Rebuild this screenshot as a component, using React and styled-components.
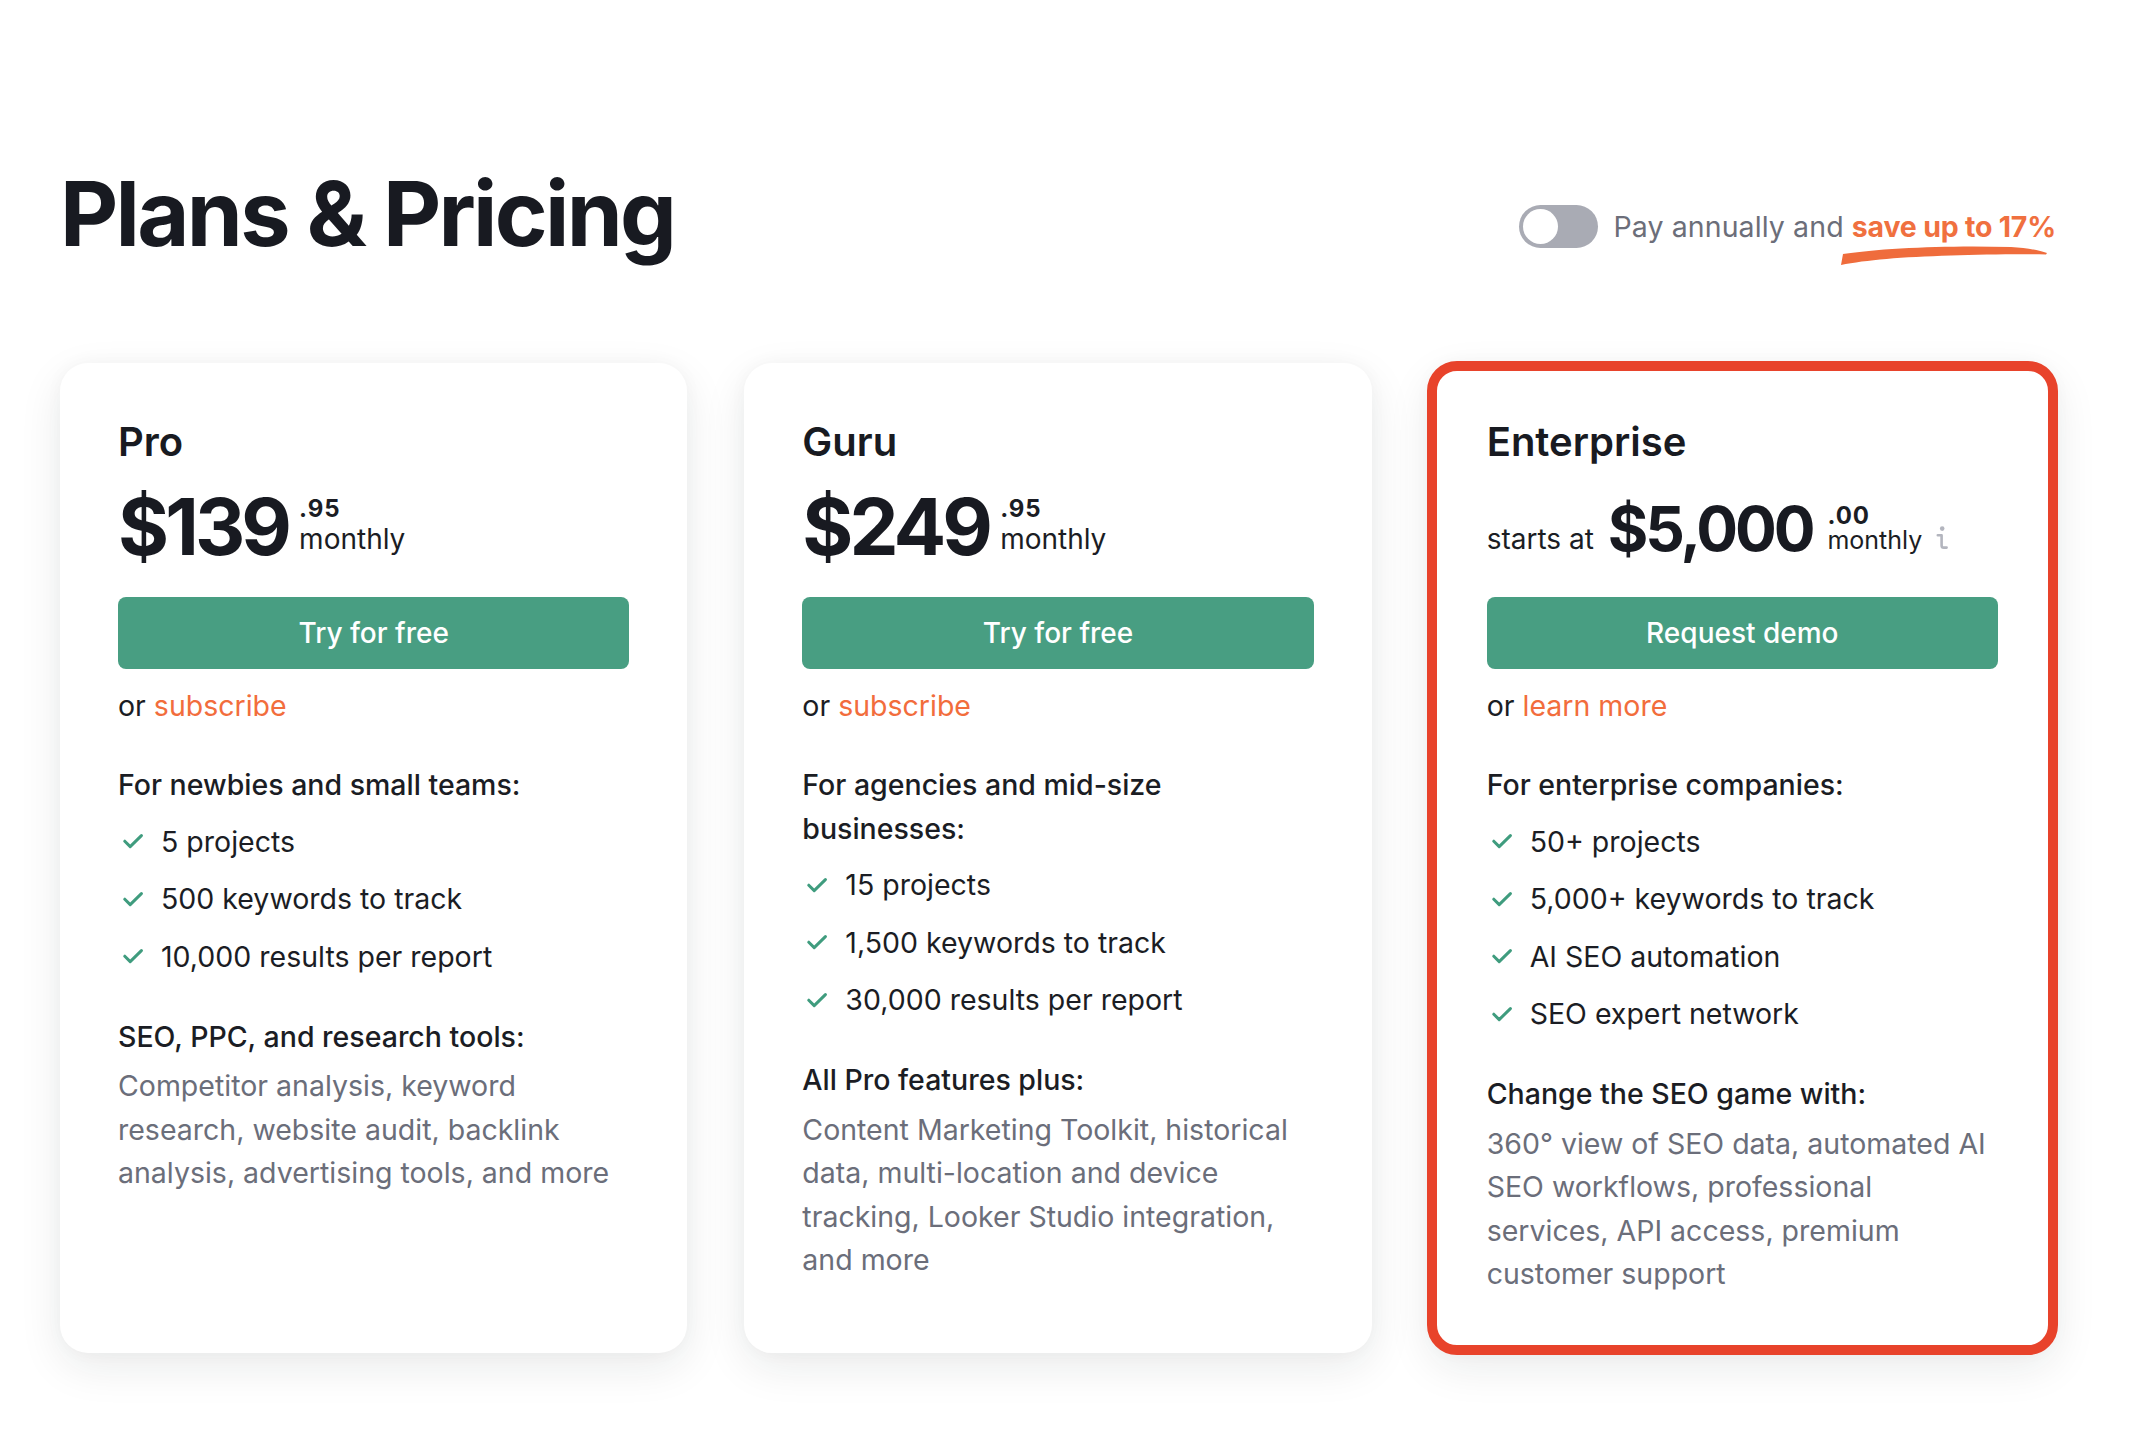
import React from 'react';
import styled, { createGlobalStyle, css } from 'styled-components';

const GlobalStyle = createGlobalStyle`
  * { box-sizing: border-box; }
  html, body { margin: 0; background: #ffffff; }
  body {
    font-family: Inter, "Noto Sans", "Liberation Sans", sans-serif;
    color: #1b1d24;
    -webkit-font-smoothing: antialiased;
  }
`;

const Page = styled.main`
  padding: 169px 0 88px 60px;
`;

const Container = styled.div`
  width: 1996px;
`;

const Header = styled.header`
  display: flex;
  justify-content: space-between;
  align-items: flex-start;
`;

const Title = styled.h1`
  margin: 0;
  font-size: 90px;
  line-height: 90px;
  font-weight: 700;
  letter-spacing: -2.7px;
  color: #181a21;
`;

const Billing = styled.div`
  display: flex;
  align-items: center;
  gap: 15px;
  margin-top: 36px;
`;

const Switch = styled.span`
  display: flex;
  align-items: center;
  width: 79px;
  height: 43px;
  padding: 4px;
  border-radius: 22px;
  background: #a9abb4;
`;

const Knob = styled.span`
  width: 35px;
  height: 35px;
  border-radius: 50%;
  background: #ffffff;
`;

const BillingText = styled.span`
  font-size: 28.5px;
  line-height: 36px;
  color: #6c6e79;
  letter-spacing: 0.1px;
`;

const Save = styled.strong`
  position: relative;
  font-weight: 700;
  color: #f0703f;
  letter-spacing: -0.2px;
`;

const SwashSvg = styled.svg`
  position: absolute;
  left: -11px;
  top: 36px;
  width: 208px;
  height: 22px;
`;

const Cards = styled.div`
  display: grid;
  grid-template-columns: repeat(3, 1fr);
  gap: 57px;
  margin-top: 104px;
`;

const Card = styled.section`
  background: #ffffff;
  border-radius: 28px;
  padding: 54.5px 58px 57px;
  box-shadow: 0 14px 44px rgba(27, 29, 38, 0.09), 0 0 18px rgba(27, 29, 38, 0.03);
  ${(p) =>
    p.$highlight &&
    css`
      outline: 10px solid #e8432b;
      outline-offset: -8px;
    `}
`;

const PlanName = styled.h2`
  margin: 0;
  font-size: 40px;
  line-height: 48px;
  font-weight: 600;
  color: #181a21;
`;

const PriceRow = styled.div`
  display: flex;
  align-items: flex-end;
  height: 78px;
  margin: 22px 0 31px;
`;

const Prefix = styled.span`
  font-size: 28px;
  line-height: 28px;
  margin: 0 14px 12.6px 0;
`;

const Amount = styled.span`
  font-size: ${(p) => p.$size}px;
  line-height: ${(p) => p.$size}px;
  font-weight: 700;
  letter-spacing: -0.05em;
  color: #181a21;
  margin-bottom: ${(p) => p.$lift}px;
`;

const Fraction = styled.span`
  display: flex;
  flex-direction: column;
  margin: 0 0 ${(p) => p.$lift}px ${(p) => p.$indent}px;
`;

const Cents = styled.span`
  font-size: 24px;
  line-height: 18px;
  font-weight: 700;
  letter-spacing: 0.04em;
  margin-bottom: ${(p) => p.$space}px;
`;

const Period = styled.span`
  font-size: ${(p) => p.$size}px;
  line-height: 24px;
`;

const InfoSvg = styled.svg`
  width: 12px;
  height: 24px;
  margin: 0 0 16px 14px;
`;

const ActionButton = styled.button`
  display: flex;
  align-items: center;
  justify-content: center;
  width: 100%;
  height: 72px;
  border: 0;
  border-radius: 8px;
  background: #489e82;
  color: #ffffff;
  font-family: inherit;
  font-size: 28px;
  font-weight: 500;
  cursor: pointer;
`;

const Alt = styled.p`
  margin: 15.5px 0 0;
  font-size: 28.5px;
  line-height: 43.5px;
`;

const AltLink = styled.a`
  color: #f26d3c;
  text-decoration: none;
`;

const SectionTitle = styled.h3`
  margin: ${(p) => (p.$first ? 35.8 : 36.5)}px 0 0;
  font-size: 28.5px;
  line-height: 43.5px;
  font-weight: 500;
  color: #1b1d24;
`;

const FeatureList = styled.ul`
  list-style: none;
  margin: 13px 0 0;
  padding: 0;
  display: flex;
  flex-direction: column;
  gap: 14px;
`;

const Feature = styled.li`
  display: flex;
  align-items: center;
  font-size: 28.5px;
  line-height: 43.5px;
`;

const CheckSvg = styled.svg`
  flex: none;
  width: 20px;
  height: 15px;
  margin: 0 18px 0 5px;
`;

const Description = styled.p`
  margin: 6px 0 0;
  font-size: 28.5px;
  line-height: 43.5px;
  color: #6b6e7a;
`;

const Check = () => (
  <CheckSvg viewBox="0 0 20 15" fill="none">
    <path d="M1.8 7.2 L7.2 12.6 L18.4 1.6" stroke="#3f9c7e" strokeWidth="3" strokeLinecap="round" strokeLinejoin="round" />
  </CheckSvg>
);

const InfoIcon = () => (
  <InfoSvg viewBox="0 0 12 24" fill="none">
    <circle cx="6.2" cy="2.6" r="2.3" fill="#b3b5be" />
    <path d="M1.8 9.2 H5.6 V19.4 Q5.6 21.6 7.8 21.6 H10.6" stroke="#b3b5be" strokeWidth="2.6" strokeLinecap="round" strokeLinejoin="round" />
  </InfoSvg>
);

const Swash = () => (
  <SwashSvg viewBox="0 0 208 22">
    <path
      d="M2 9 C40 3, 110 0, 170 2 C185 3, 198 5, 206 8 L205 9.5 C180 9, 140 9.5, 110 10.5 C60 12, 25 15, 0 20 Z"
      fill="#ef6c3c"
    />
  </SwashSvg>
);

const plans = [
  {
    name: 'Pro',
    price: '$139',
    cents: '.95',
    action: 'Try for free',
    alt: 'subscribe',
    audience: 'For newbies and small teams:',
    features: ['5 projects', '500 keywords to track', '10,000 results per report'],
    toolsTitle: 'SEO, PPC, and research tools:',
    tools: 'Competitor analysis, keyword research, website audit, backlink analysis, advertising tools, and more',
  },
  {
    name: 'Guru',
    price: '$249',
    cents: '.95',
    action: 'Try for free',
    alt: 'subscribe',
    audience: 'For agencies and mid-size businesses:',
    features: ['15 projects', '1,500 keywords to track', '30,000 results per report'],
    toolsTitle: 'All Pro features plus:',
    tools: 'Content Marketing Toolkit, historical data, multi-location and device tracking, Looker Studio integration, and more',
  },
  {
    name: 'Enterprise',
    prefix: 'starts at',
    price: '$5,000',
    cents: '.00',
    action: 'Request demo',
    alt: 'learn more',
    audience: 'For enterprise companies:',
    features: ['50+ projects', '5,000+ keywords to track', 'AI SEO automation', 'SEO expert network'],
    toolsTitle: 'Change the SEO game with:',
    tools: '360° view of SEO data, automated AI SEO workflows, professional services, API access, premium customer support',
    highlight: true,
  },
];

const PlanCard = ({ plan }) => {
  const enterprise = Boolean(plan.prefix);
  return (
    <Card $highlight={plan.highlight}>
      <PlanName>{plan.name}</PlanName>
      <PriceRow>
        {enterprise && <Prefix>{plan.prefix}</Prefix>}
        <Amount $size={enterprise ? 62 : 78} $lift={enterprise ? 5.5 : 0}>
          {plan.price}
        </Amount>
        <Fraction $lift={enterprise ? 13.8 : 14.9} $indent={enterprise ? 15 : 11}>
          <Cents $space={enterprise ? 3 : 8.5}>{plan.cents}</Cents>
          <Period $size={enterprise ? 25 : 28}>monthly</Period>
        </Fraction>
        {enterprise && <InfoIcon />}
      </PriceRow>
      <ActionButton>{plan.action}</ActionButton>
      <Alt>
        or <AltLink href="#">{plan.alt}</AltLink>
      </Alt>
      <SectionTitle $first>{plan.audience}</SectionTitle>
      <FeatureList>
        {plan.features.map((f) => (
          <Feature key={f}>
            <Check />
            {f}
          </Feature>
        ))}
      </FeatureList>
      <SectionTitle>{plan.toolsTitle}</SectionTitle>
      <Description>{plan.tools}</Description>
    </Card>
  );
};

export default function App() {
  return (
    <>
      <GlobalStyle />
      <Page>
        <Container>
          <Header>
            <Title>Plans &amp; Pricing</Title>
            <Billing>
              <Switch>
                <Knob />
              </Switch>
              <BillingText>
                Pay annually and{' '}
                <Save>
                  save up to 17%
                  <Swash />
                </Save>
              </BillingText>
            </Billing>
          </Header>
          <Cards>
            {plans.map((p) => (
              <PlanCard key={p.name} plan={p} />
            ))}
          </Cards>
        </Container>
      </Page>
    </>
  );
}
